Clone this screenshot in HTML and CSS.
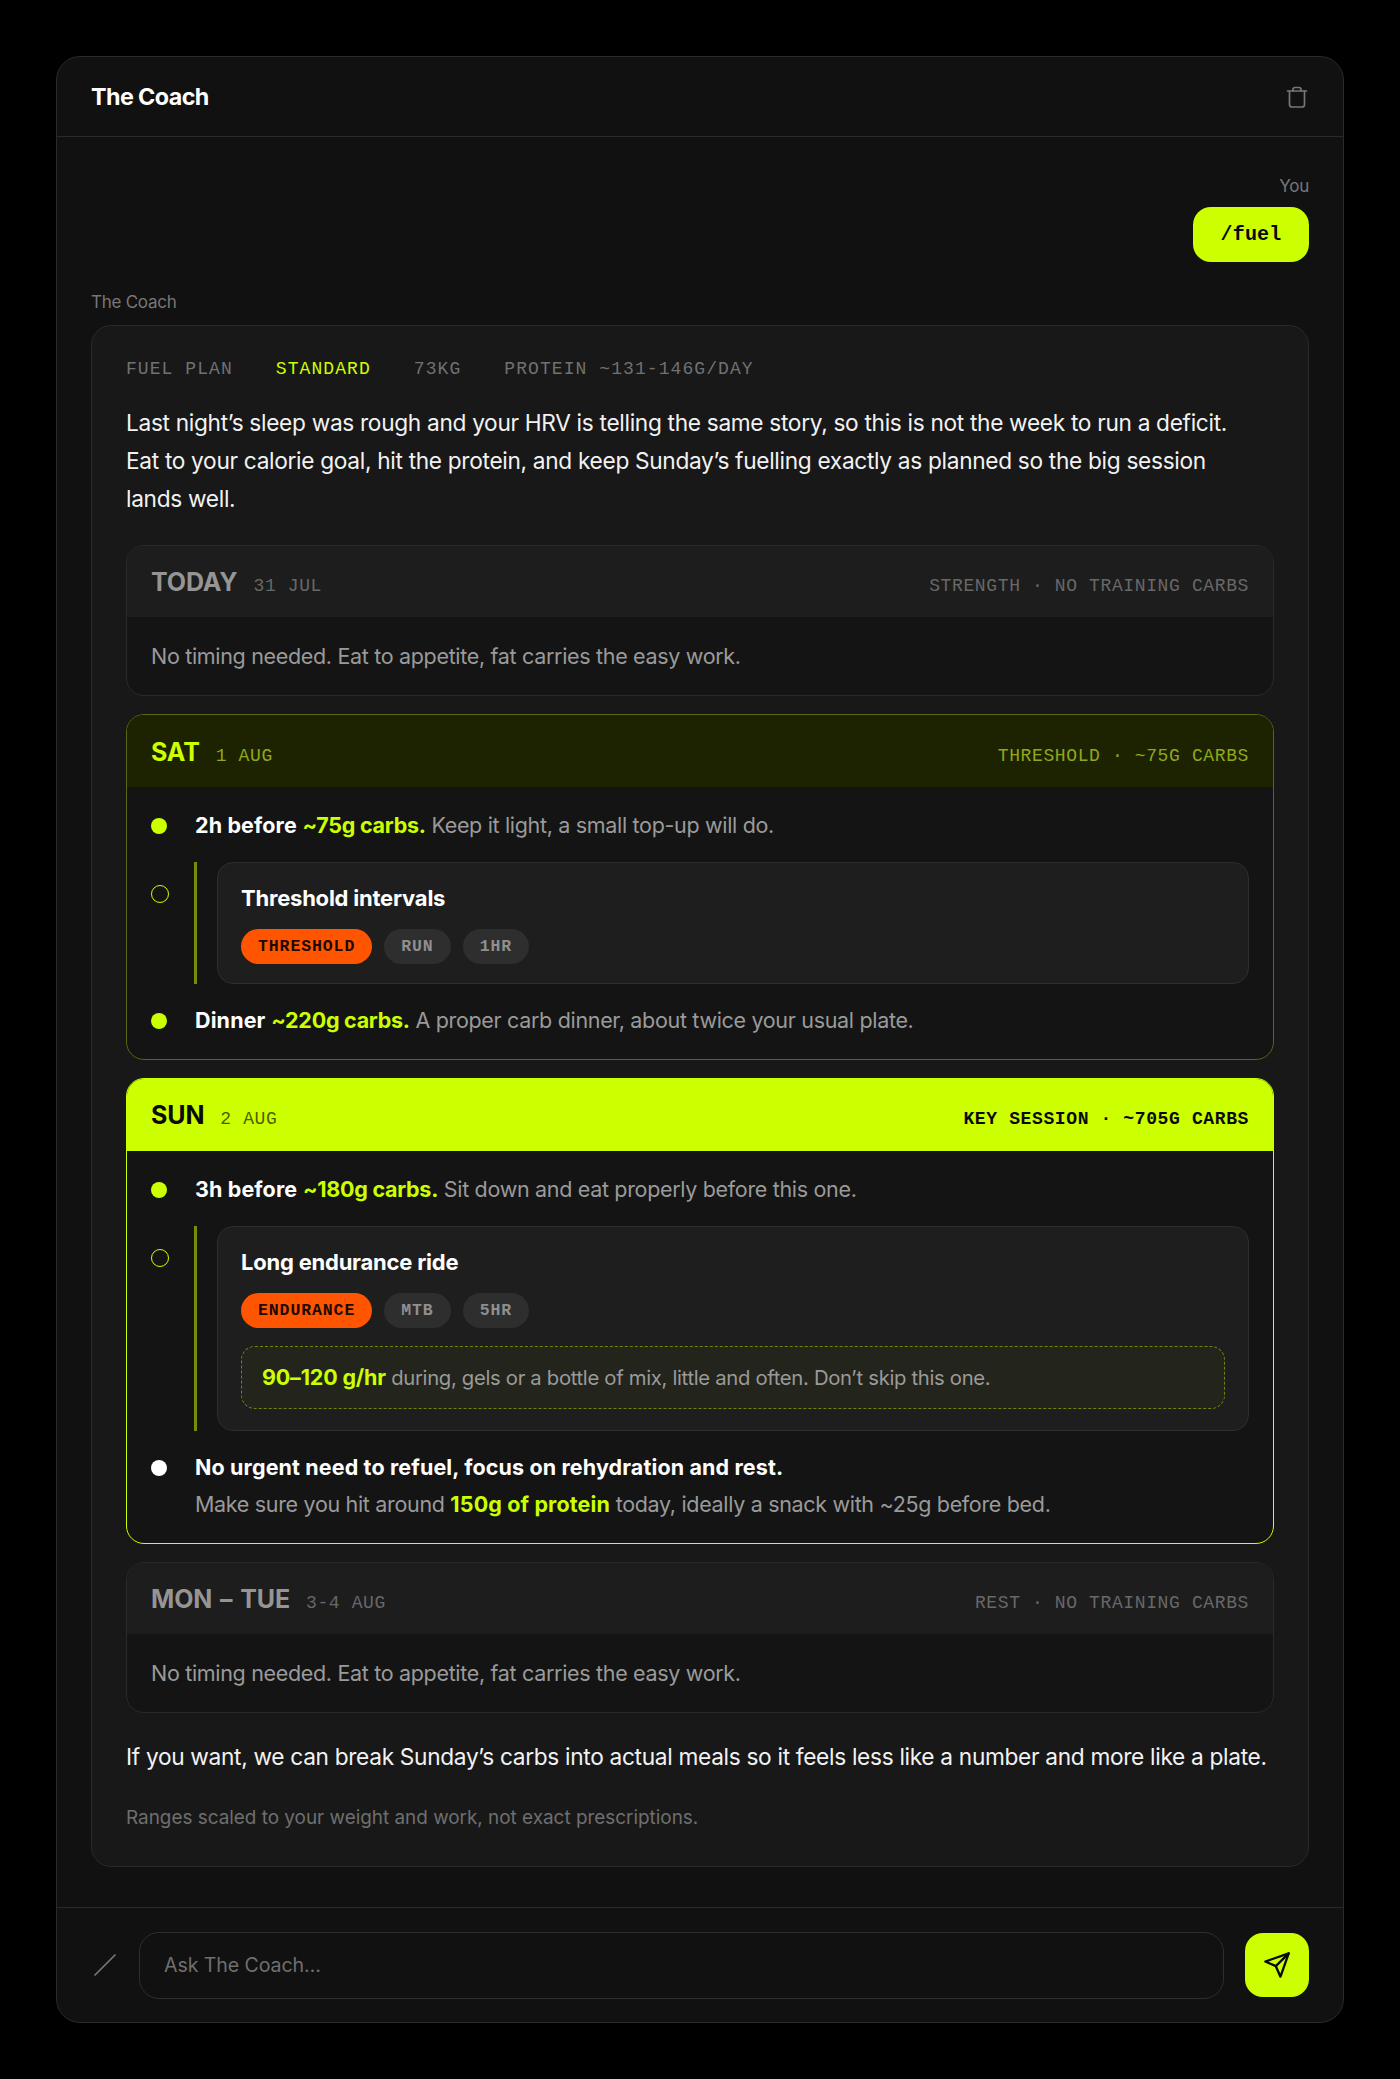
FILE: index.html
```html
<!DOCTYPE html>
<html lang="en">

<head>
    <meta charset="UTF-8" />
    <meta name="viewport" content="width=device-width, initial-scale=1.0" />
    <title>The Coach</title>
    <link rel="stylesheet" href="styles.css">
</head>

<body>
    <div class="panel">
        <header class="panel-head">
            <h1 class="panel-title">The Coach</h1>
            <svg class="trash" viewBox="0 0 24 24" width="24" height="24" fill="none" stroke="currentColor" stroke-width="1.7" stroke-linecap="round" stroke-linejoin="round">
                <path d="M2.5 6h19" />
                <path d="M8 6V4.500a2 2 0 0 1 2-2h4a2 2 0 0 1 2 2V6" />
                <path d="M4.500 6v13.500a2.500 2.500 0 0 0 2.500 2.500h10a2.500 2.500 0 0 0 2.500-2.500V6" />
            </svg>
        </header>

        <main class="chat">
            <div class="you">
                <div class="who">You</div>
                <div class="bubble">/fuel</div>
            </div>

            <div class="who coach-who">The Coach</div>
            <section class="card">
                <div class="meta">
                    <span>FUEL PLAN</span>
                    <span class="lime">STANDARD</span>
                    <span>73KG</span>
                    <span>PROTEIN ~131-146G/DAY</span>
                </div>
                <p class="lead">Last night’s sleep was rough and your HRV is telling the same story, so this is not the week to run a deficit.<br>Eat to your calorie goal, hit the protein, and keep Sunday’s fuelling exactly as planned so the big session<br>lands well.</p>

                <div class="day day-off">
                    <div class="day-head">
                        <div class="day-name"><b>TODAY</b><span>31 JUL</span></div>
                        <div class="day-tag">STRENGTH · NO TRAINING CARBS</div>
                    </div>
                    <div class="day-body off-text">No timing needed. Eat to appetite, fat carries the easy work.</div>
                </div>

                <div class="day day-sat">
                    <div class="day-head">
                        <div class="day-name"><b>SAT</b><span>1 AUG</span></div>
                        <div class="day-tag">THRESHOLD · ~75G CARBS</div>
                    </div>
                    <div class="day-body rows">
                        <div class="row">
                            <i class="dot"></i>
                            <div class="txt"><b>2h before</b> <b class="lime">~75g carbs.</b> Keep it light, a small top-up will do.</div>
                        </div>
                        <div class="row">
                            <i class="ring"></i>
                            <div class="workout">
                                <div class="wk-title">Threshold intervals</div>
                                <div class="pills">
                                    <span class="pill pill-hot">THRESHOLD</span>
                                    <span class="pill">RUN</span>
                                    <span class="pill">1HR</span>
                                </div>
                            </div>
                        </div>
                        <div class="row">
                            <i class="dot"></i>
                            <div class="txt"><b>Dinner</b> <b class="lime">~220g carbs.</b> A proper carb dinner, about twice your usual plate.</div>
                        </div>
                    </div>
                </div>

                <div class="day day-key">
                    <div class="day-head">
                        <div class="day-name"><b>SUN</b><span>2 AUG</span></div>
                        <div class="day-tag">KEY SESSION · ~705G CARBS</div>
                    </div>
                    <div class="day-body rows">
                        <div class="row">
                            <i class="dot"></i>
                            <div class="txt"><b>3h before</b> <b class="lime">~180g carbs.</b> Sit down and eat properly before this one.</div>
                        </div>
                        <div class="row">
                            <i class="ring"></i>
                            <div class="workout">
                                <div class="wk-title">Long endurance ride</div>
                                <div class="pills">
                                    <span class="pill pill-hot">ENDURANCE</span>
                                    <span class="pill">MTB</span>
                                    <span class="pill">5HR</span>
                                </div>
                                <div class="callout"><b class="lime">90–120 g/hr</b> during, gels or a bottle of mix, little and often. Don’t skip this one.</div>
                            </div>
                        </div>
                        <div class="row">
                            <i class="dot dot-white"></i>
                            <div class="txt">
                                <b>No urgent need to refuel, focus on rehydration and rest.</b>
                                <div class="txt-sub">Make sure you hit around <b class="lime">150g of protein</b> today, ideally a snack with ~25g before bed.</div>
                            </div>
                        </div>
                    </div>
                </div>

                <div class="day day-off">
                    <div class="day-head">
                        <div class="day-name"><b>MON – TUE</b><span>3-4 AUG</span></div>
                        <div class="day-tag">REST · NO TRAINING CARBS</div>
                    </div>
                    <div class="day-body off-text">No timing needed. Eat to appetite, fat carries the easy work.</div>
                </div>

                <p class="closing">If you want, we can break Sunday’s carbs into actual meals so it feels less like a number and more like a plate.</p>
                <p class="note">Ranges scaled to your weight and work, not exact prescriptions.</p>
            </section>
        </main>

        <footer class="composer">
            <svg class="slash" viewBox="0 0 22 22" width="22" height="22" fill="none" stroke="currentColor" stroke-width="1.7" stroke-linecap="round">
                <path d="M1 21L21 1" />
            </svg>
            <div class="ask">Ask The Coach…</div>
            <div class="send">
                <svg viewBox="0 0 24 24" width="28" height="28" fill="none" stroke="currentColor" stroke-width="2" stroke-linecap="round" stroke-linejoin="round">
                    <path d="M22 2L11 13" />
                    <path d="M22 2L15 22L11 13L2 9Z" />
                </svg>
            </div>
        </footer>
    </div>
</body>

</html>
```

FILE: styles.css
```css
* {
    box-sizing: border-box;
}

body {
    margin: 0;
    padding: 56px;
    background-color: #000;
    color: #fff;
    font-family: Inter, "Noto Sans", sans-serif;
    letter-spacing: -0.02em;
}

b {
    font-weight: 700;
}

.lime {
    color: #ccff00;
}

.panel {
    height: 1967px;
    display: flex;
    flex-direction: column;
    background-color: #111;
    border: 1px solid #2a2a2a;
    border-radius: 24px;
}

.panel-head {
    height: 80px;
    flex: none;
    display: flex;
    align-items: center;
    justify-content: space-between;
    padding: 0 34px;
    border-bottom: 1px solid #2a2a2a;
}

.panel-title {
    margin: 0;
    font-size: 23.300px;
    font-weight: 700;
    letter-spacing: -0.025em;
}

.trash {
    color: #777;
}

.chat {
    flex: 1;
    padding: 37px 34px 0;
}

.you {
    display: flex;
    flex-direction: column;
    align-items: flex-end;
}

.who {
    font-size: 17px;
    line-height: 24px;
    color: #777;
    letter-spacing: -0.015em;
}

.bubble {
    margin-top: 9px;
    width: 116px;
    height: 55px;
    display: flex;
    align-items: center;
    justify-content: center;
    background-color: #ccff00;
    border-radius: 18px;
    color: #0a0a0a;
    font-family: "Liberation Mono", monospace;
    font-size: 20px;
    font-weight: 700;
    letter-spacing: 0.200px;
}

.coach-who {
    margin-top: 28px;
}

.card {
    margin-top: 11px;
    height: 1542px;
    padding: 31px 34px 0;
    background-color: #181818;
    border: 1px solid #2a2a2a;
    border-radius: 20px;
}

.meta {
    display: flex;
    gap: 43px;
    font-family: "Liberation Mono", monospace;
    font-size: 18px;
    line-height: 24px;
    letter-spacing: 1.070px;
    color: #717171;
}

.lead {
    margin: 23px 0 0;
    font-size: 22.700px;
    line-height: 38px;
    color: #f2f2f2;
}

.day {
    margin-top: 18px;
    border: 1px solid #2a2a2a;
    border-radius: 18px;
    background-color: #141414;
    overflow: hidden;
}

.lead + .day {
    margin-top: 27px;
}

.day-head {
    height: 72px;
    display: flex;
    align-items: baseline;
    justify-content: space-between;
    padding: 22px 24px 0;
    background-color: #1d1d1d;
}

.day-name {
    display: flex;
    align-items: baseline;
    gap: 16px;
}

.day-name b {
    font-size: 25px;
    line-height: 30px;
    font-weight: 700;
    letter-spacing: -0.005em;
    word-spacing: 2px;
}

.day-name span,
.day-tag {
    font-family: "Liberation Mono", monospace;
    font-size: 18px;
    letter-spacing: 0.620px;
}

.day-off .day-head {
    height: 71px;
    padding-top: 21px;
}

.day-off .day-name b {
    color: #959595;
}

.day-off .day-name span,
.day-off .day-tag {
    color: #686868;
}

.day-body {
    padding: 24px;
    font-size: 21.500px;
    line-height: 30px;
    letter-spacing: -0.015em;
}

.off-text {
    color: #9a9a9a;
}

.day-sat {
    border-color: #5a6612;
}

.day-sat .day-head {
    background-color: #1d2200;
}

.day-sat .day-name b {
    color: #ccff00;
}

.day-sat .day-name span,
.day-sat .day-tag {
    color: #8fa91c;
}

.day-key {
    border-color: #ccff00;
}

.day-key .day-head {
    height: 73px;
    background-color: #ccff00;
    margin: -1px -1px 0;
    padding-left: 25px;
    padding-right: 25px;
    color: #0a0a0a;
}

.day-key .day-name b {
    color: #0a0a0a;
}

.day-key .day-name span {
    color: #4c5f00;
}

.day-key .day-tag {
    color: #0a0a0a;
    font-weight: 700;
}

.rows {
    display: flex;
    flex-direction: column;
    gap: 22px;
    font-size: 21.500px;
    line-height: 29px;
}

.row {
    display: grid;
    grid-template-columns: 44px 1fr;
    align-items: start;
}

.dot {
    width: 16px;
    height: 16px;
    margin-top: 7px;
    border-radius: 50%;
    background-color: #ccff00;
}

.dot-white {
    background-color: #fff;
}

.ring {
    width: 18px;
    height: 18px;
    margin-top: 23px;
    border: 1.500px solid #ccff00;
    border-radius: 50%;
}

.txt {
    color: #9a9a9a;
}

.txt b {
    letter-spacing: 0.006em;
}

.txt > b {
    color: #fff;
}

.txt > b.lime {
    color: #ccff00;
    letter-spacing: -0.012em;
}

.txt-sub {
    margin-top: 8px;
}

.workout {
    position: relative;
    margin-left: 22px;
    padding: 21px 23px 19px;
    background-color: #1e1e1e;
    border: 1px solid #2e2e2e;
    border-radius: 16px;
}

/* bar to the left of the session card */
.workout::before {
    content: "";
    position: absolute;
    left: -24px;
    top: -1px;
    bottom: -1px;
    width: 3px;
    background-color: #7a8c0a;
}

.wk-title {
    font-size: 22px;
    font-weight: 700;
    line-height: 29px;
    color: #fff;
    letter-spacing: -0.01em;
}

.pills {
    display: flex;
    gap: 12px;
    margin-top: 16px;
}

.pill {
    height: 35px;
    padding: 0 17px;
    display: flex;
    align-items: center;
    background-color: #2e2e2e;
    border-radius: 18px;
    font-family: "Liberation Mono", monospace;
    font-size: 16.500px;
    font-weight: 700;
    letter-spacing: 0.900px;
    color: #8f8f8f;
}

.pill-hot {
    background-color: #ff5500;
    color: #1d0900;
}

.callout {
    margin: 18px 0 2px;
    height: 63px;
    padding: 0 20px;
    background-color: #23241b;
    border: 1px dashed #72820f;
    border-radius: 14px;
    font-size: 20.300px;
    line-height: 61px;
    color: #9a9a9a;
}

.callout b {
    font-size: 21.500px;
    letter-spacing: -0.008em;
}

.closing {
    margin: 25px 0 0;
    font-size: 22.700px;
    line-height: 38px;
    color: #f2f2f2;
}

.note {
    margin: 29px 0 0;
    font-size: 18.900px;
    line-height: 26px;
    color: #6f6f6f;
    letter-spacing: 0;
}

.composer {
    height: 115px;
    flex: none;
    display: flex;
    align-items: center;
    gap: 21px;
    padding: 0 34px;
    border-top: 1px solid #2a2a2a;
}

.slash {
    color: #777;
    flex: none;
    margin-left: 3px;
}

.ask {
    flex: 1;
    height: 67px;
    display: flex;
    align-items: center;
    margin-left: 2px;
    padding: 0 24px;
    border: 1px solid #2e2e2e;
    border-radius: 20px;
    color: #6f6f6f;
    font-size: 19.600px;
    letter-spacing: -0.005em;
}

.send {
    width: 64px;
    height: 64px;
    flex: none;
    display: flex;
    align-items: center;
    justify-content: center;
    background-color: #ccff00;
    border-radius: 18px;
    color: #0a0a0a;
}
```
